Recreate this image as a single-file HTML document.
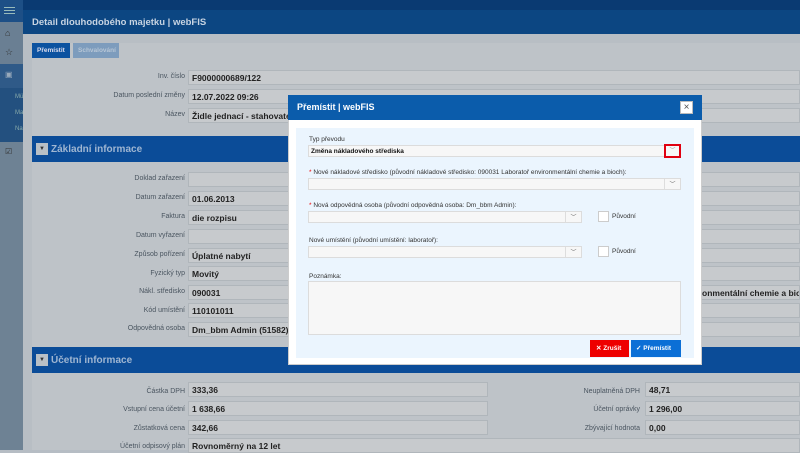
<!DOCTYPE html>
<html><head><meta charset="utf-8"><style>
*{margin:0;padding:0;box-sizing:border-box}
body{width:800px;height:450px;overflow:hidden;position:relative;font-family:"Liberation Sans",sans-serif;background:#b6bdc4}
.a{position:absolute}
.lbl{position:absolute;font-size:7px;color:#4a5560;text-align:right;width:150px}
.inp{position:absolute;height:15px;background:#c7cacd;border:1px solid #b0b6bb;font-size:8.5px;font-weight:bold;color:#222;padding:2px 0 0 3px;white-space:nowrap;overflow:hidden}
.sec{position:absolute;left:32px;width:768px;height:26px;background:#0b4c98;color:#9fb6d2;font-size:10px;font-weight:bold;padding:8px 0 0 19px}
.sec i{position:absolute;left:4px;top:7px;width:12px;height:12px;background:#b9c0c6;font-style:normal;font-size:6px;color:#333;text-align:center;line-height:12px}
.m{position:absolute;font-size:6.5px;color:#333}
.sel{position:absolute;height:12px;background:#f7f7f7;border:1px solid #dcdcdc}
.sel b{position:absolute;right:0;top:0;width:16px;height:10px;border-left:1px solid #ddd;font-size:6px;color:#666;text-align:center;line-height:12px;font-weight:normal}
.cb{position:absolute;width:11px;height:11px;background:#fff;border:1px solid #ccc}
</style></head><body>
<div class="a" style="left:0;top:0;width:800px;height:10px;background:#0a3a72"></div>
<div class="a" style="left:0;top:0;width:23px;height:22px;background:#1d4f86"></div>
<div class="a" style="left:4px;top:7px;width:11px;height:1px;background:#9bb;box-shadow:0 3px 0 #9bb,0 6px 0 #9bb"></div>
<div class="a" style="left:0;top:22px;width:23px;height:42px;background:#6a7f93"></div>
<div class="a" style="left:0;top:64px;width:23px;height:24px;background:#2f5a88"></div>
<div class="a" style="left:0;top:88px;width:23px;height:54px;background:#23507f"></div>
<div class="a" style="left:0;top:142px;width:23px;height:308px;background:#6e8294"></div>
<div class="a" style="left:5px;top:28px;font-size:9px;color:#333">⌂</div>
<div class="a" style="left:5px;top:47px;font-size:9px;color:#333">☆</div>
<div class="a" style="left:5px;top:70px;font-size:8px;color:#9ab">▣</div>
<div class="a" style="left:5px;top:147px;font-size:8px;color:#333">☑</div>
<div class="a" style="left:15px;top:94px;font-size:6px;color:#8aa">Mü</div>
<div class="a" style="left:15px;top:110px;font-size:6px;color:#8aa">Ma</div>
<div class="a" style="left:15px;top:126px;font-size:6px;color:#8aa">Na</div>
<div class="a" style="left:23px;top:10px;width:777px;height:24px;background:#0c4682;color:#c8d4e2;font-size:9.5px;font-weight:bold;padding:7px 0 0 9px">Detail dlouhodobého majetku | webFIS</div>
<div class="a" style="left:23px;top:34px;width:777px;height:416px;background:#b8bec4"></div>
<div class="a" style="left:32px;top:43px;width:768px;height:407px;background:#bec3c8"></div>
<div class="a" style="left:32px;top:43px;width:38px;height:15px;background:#0c52a0;color:#dde;font-size:6.5px;font-weight:bold;padding:4px 0 0 5px">Přemístit</div>
<div class="a" style="left:73px;top:43px;width:46px;height:15px;background:#7d9cbd;color:#b7c6d6;font-size:6.5px;font-weight:bold;padding:4px 0 0 5px">Schvalování</div>

<div class="lbl" style="left:35px;top:73px">Inv. číslo</div><div class="inp" style="left:188px;top:70px;width:612px">F9000000689/122</div>
<div class="lbl" style="left:35px;top:92px">Datum poslední změny</div><div class="inp" style="left:188px;top:89px;width:612px">12.07.2022 09:26</div>
<div class="lbl" style="left:35px;top:111px">Název</div><div class="inp" style="left:188px;top:108px;width:612px">Židle jednací - stahovatelná</div>

<div class="sec" style="top:136px"><i>▼</i>Základní informace</div>
<div class="lbl" style="left:35px;top:175px">Doklad zařazení</div><div class="inp" style="left:188px;top:172px;width:612px"></div>
<div class="lbl" style="left:35px;top:194px">Datum zařazení</div><div class="inp" style="left:188px;top:191px;width:612px">01.06.2013</div>
<div class="lbl" style="left:35px;top:213px">Faktura</div><div class="inp" style="left:188px;top:210px;width:612px">die rozpisu</div>
<div class="lbl" style="left:35px;top:232px">Datum vyřazení</div><div class="inp" style="left:188px;top:229px;width:612px"></div>
<div class="lbl" style="left:35px;top:251px">Způsob pořízení</div><div class="inp" style="left:188px;top:248px;width:612px">Úplatné nabytí</div>
<div class="lbl" style="left:35px;top:270px">Fyzický typ</div><div class="inp" style="left:188px;top:266px;width:612px">Movitý</div>
<div class="lbl" style="left:35px;top:288px">Nákl. středisko</div><div class="inp" style="left:188px;top:285px;width:612px">090031 <span style="position:absolute;left:513px">onmentální chemie a bioch</span></div>
<div class="lbl" style="left:35px;top:307px">Kód umístění</div><div class="inp" style="left:188px;top:303px;width:612px">110101011</div>
<div class="lbl" style="left:35px;top:325px">Odpovědná osoba</div><div class="inp" style="left:188px;top:322px;width:612px">Dm_bbm Admin (51582)</div>

<div class="sec" style="top:347px"><i>▼</i>Účetní informace</div>
<div class="lbl" style="left:35px;top:388px">Částka DPH</div><div class="inp" style="left:188px;top:382px;width:300px">333,36</div>
<div class="lbl" style="left:35px;top:406px">Vstupní cena účetní</div><div class="inp" style="left:188px;top:401px;width:300px">1 638,66</div>
<div class="lbl" style="left:35px;top:425px">Zůstatková cena</div><div class="inp" style="left:188px;top:420px;width:300px">342,66</div>
<div class="lbl" style="left:35px;top:443px">Účetní odpisový plán</div><div class="inp" style="left:188px;top:438px;width:612px">Rovnoměrný na 12 let</div>
<div class="lbl" style="left:490px;top:388px">Neuplatněná DPH</div><div class="inp" style="left:645px;top:382px;width:155px">48,71</div>
<div class="lbl" style="left:490px;top:406px">Účetní oprávky</div><div class="inp" style="left:645px;top:401px;width:155px">1 296,00</div>
<div class="lbl" style="left:490px;top:425px">Zbývající hodnota</div><div class="inp" style="left:645px;top:420px;width:155px">0,00</div>

<div class="a" style="left:288px;top:95px;width:414px;height:270px;background:#fff;border:1px solid #ccc"></div>
<div class="a" style="left:288px;top:95px;width:414px;height:25px;background:#0b5cab;color:#fff;font-size:9px;font-weight:bold;padding:7px 0 0 9px">Přemístit | webFIS</div>
<div class="a" style="left:680px;top:101px;width:13px;height:13px;background:#fff;border:1px solid #bbb;font-size:10px;color:#555;text-align:center;line-height:11px">×</div>
<div class="a" style="left:296px;top:128px;width:398px;height:230px;background:#ebf5fe"></div>
<div class="m" style="left:309px;top:136px">Typ převodu</div>
<div class="sel" style="left:308px;top:145px;width:373px;height:12px;font-size:6.5px;font-weight:bold;color:#111;padding:2px 0 0 2px">Změna nákladového střediska</div>
<div class="a" style="left:664px;top:144px;width:17px;height:14px;border:2px solid #e00010;font-size:6px;color:#999;text-align:center;line-height:10px">﹀</div>
<div class="m" style="left:309px;top:169px"><span style="color:#e00">*</span> Nové nákladové středisko (původní nákladové středisko: 090031 Laboratoř environmentální chemie a bioch):</div>
<div class="sel" style="left:308px;top:178px;width:373px"><b>﹀</b></div>
<div class="m" style="left:309px;top:202px"><span style="color:#e00">*</span> Nová odpovědná osoba (původní odpovědná osoba: Dm_bbm Admin):</div>
<div class="sel" style="left:308px;top:211px;width:274px"><b>﹀</b></div>
<div class="cb" style="left:598px;top:211px"></div><div class="m" style="left:612px;top:213px">Původní</div>
<div class="m" style="left:309px;top:237px">Nové umístění (původní umístění: laboratoř):</div>
<div class="sel" style="left:308px;top:246px;width:274px"><b>﹀</b></div>
<div class="cb" style="left:598px;top:246px"></div><div class="m" style="left:612px;top:248px">Původní</div>
<div class="m" style="left:309px;top:273px">Poznámka:</div>
<div class="a" style="left:308px;top:281px;width:373px;height:54px;background:#f7f7f7;border:1px solid #dcdcdc"></div>
<div class="a" style="left:590px;top:340px;width:39px;height:17px;background:#ee0000;color:#fff;font-size:6.5px;font-weight:bold;padding:4px 0 0 6px">✕ Zrušit</div>
<div class="a" style="left:631px;top:340px;width:50px;height:17px;background:#0b6fd6;color:#fff;font-size:6.5px;font-weight:bold;padding:4px 0 0 5px">✓ Přemístit</div>
</body></html>
